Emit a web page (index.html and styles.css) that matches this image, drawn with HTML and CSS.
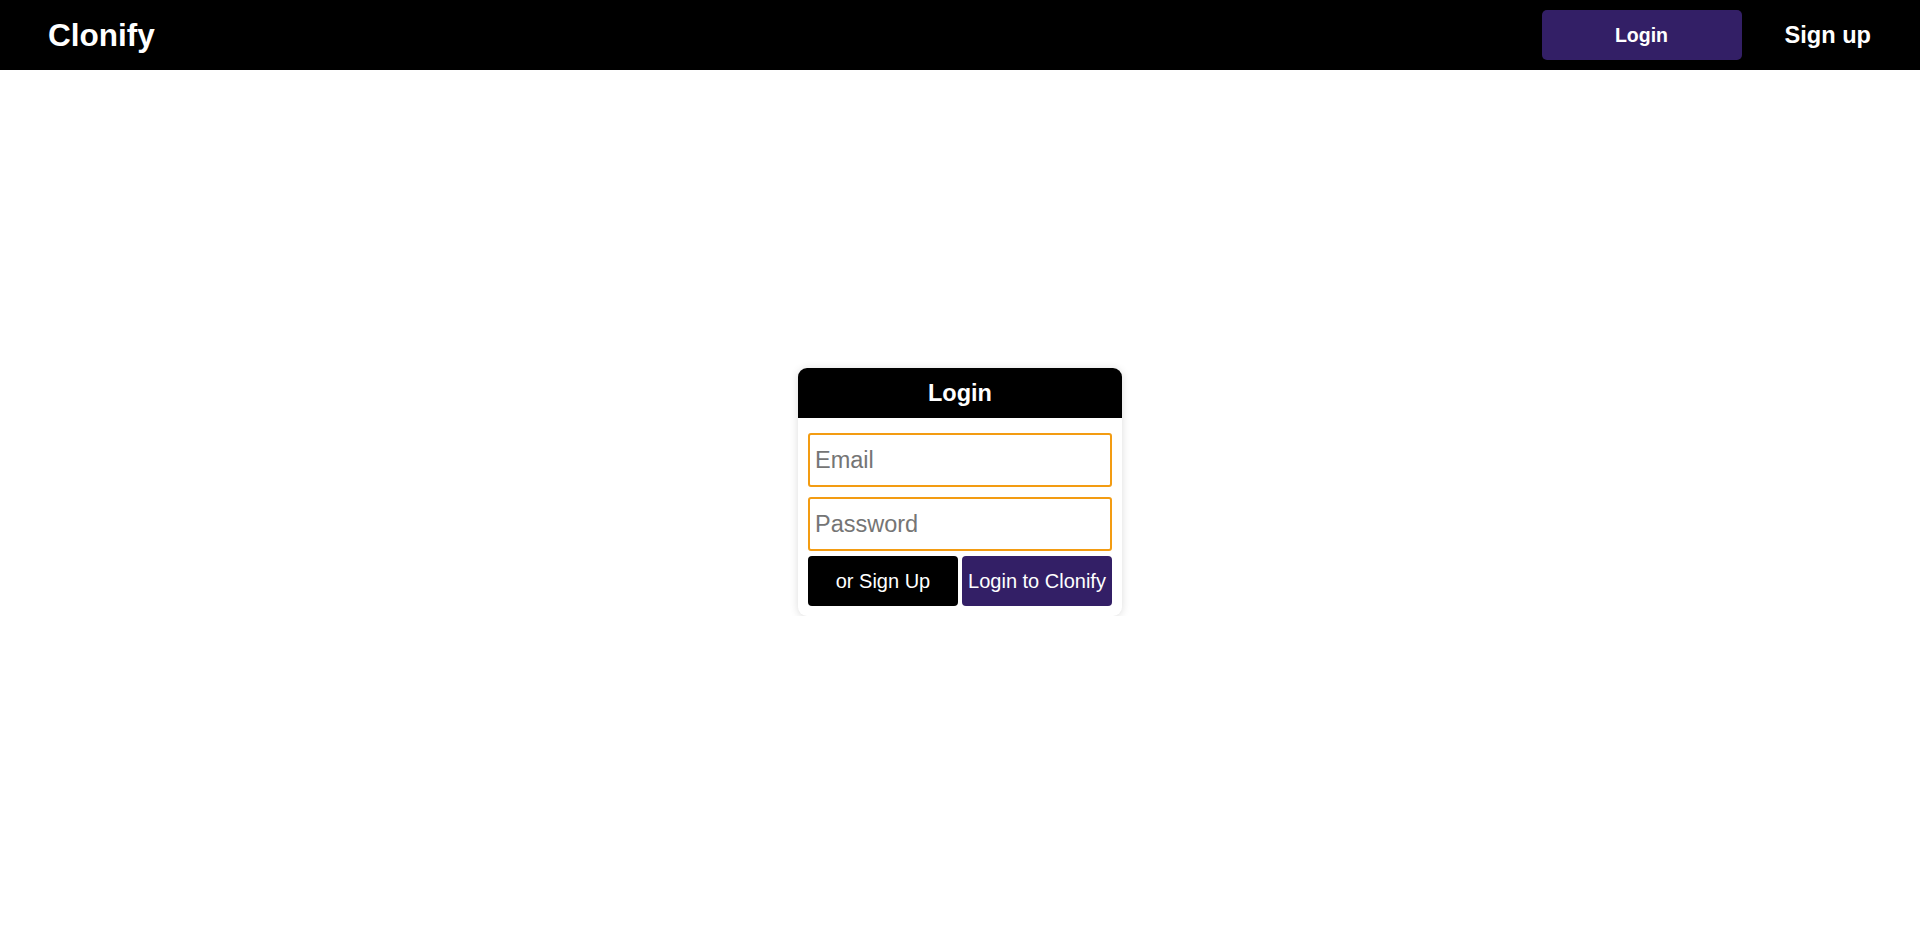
FILE: index.html
```html
<!DOCTYPE html>
<html lang="en">
<head>
<meta charset="utf-8">
<title>Clonify</title>
<link rel="stylesheet" href="styles.css">
</head>
<body>
<header class="navbar">
  <div class="logo">Clonify</div>
  <nav class="nav-actions">
    <button class="nav-login">Login</button>
    <a class="nav-signup" href="#">Sign up</a>
  </nav>
</header>
<main class="main">
  <div class="card">
    <div class="card-header">Login</div>
    <form class="card-body">
      <input class="field field-email" type="email" placeholder="Email">
      <input class="field field-password" type="password" placeholder="Password">
      <div class="actions">
        <button type="button" class="btn btn-dark">or Sign Up</button>
        <button type="button" class="btn btn-purple">Login to Clonify</button>
      </div>
    </form>
  </div>
</main>
</body>
</html>
```

FILE: styles.css
```css
* { box-sizing: border-box; }
html, body { margin: 0; padding: 0; }
body {
  font-family: "Liberation Sans", Arial, sans-serif;
  background: #fff;
  color: #000;
}
.navbar {
  height: 70px;
  background: #000;
  display: flex;
  align-items: center;
  justify-content: space-between;
  padding: 0 49px 0 48px;
}
.logo {
  color: #fff;
  font-weight: bold;
  font-size: 31.5px;
}
.nav-actions {
  display: flex;
  align-items: center;
  gap: 43px;
}
.nav-login {
  width: 200px;
  height: 50px;
  border: none;
  border-radius: 5px;
  background: #331f66;
  color: #fff;
  font-family: inherit;
  font-weight: bold;
  font-size: 19.5px;
  padding: 0;
}
.nav-signup {
  color: #fff;
  text-decoration: none;
  font-weight: bold;
  font-size: 23.6px;
}
.main {
  display: flex;
  justify-content: center;
  padding-top: 298px;
}
.card {
  width: 324px;
  background: #fff;
  border-radius: 9px;
  box-shadow: 0 1px 8px rgba(0, 0, 0, 0.14);
  overflow: hidden;
}
.card-header {
  height: 50px;
  background: #000;
  color: #fff;
  font-weight: bold;
  font-size: 23.5px;
  display: flex;
  align-items: center;
  justify-content: center;
}
.card-body {
  margin: 0;
  padding: 15px 10px 10px;
  display: flex;
  flex-direction: column;
}
.field {
  height: 54px;
  width: 100%;
  border: 2px solid #f39c12;
  border-radius: 3px;
  padding: 0 5px;
  font-family: inherit;
  font-size: 23.5px;
  color: #000;
  outline: none;
}
.field::placeholder { color: #757575; }
.field-email { margin-bottom: 10px; }
.field-password { margin-bottom: 5px; }
.actions {
  display: flex;
  gap: 4px;
}
.btn {
  flex: 1;
  height: 50px;
  border: none;
  border-radius: 4px;
  color: #fff;
  font-family: inherit;
  font-size: 20px;
  padding: 0;
}
.btn-dark { background: #000; }
.btn-purple { background: #331f66; }
```
